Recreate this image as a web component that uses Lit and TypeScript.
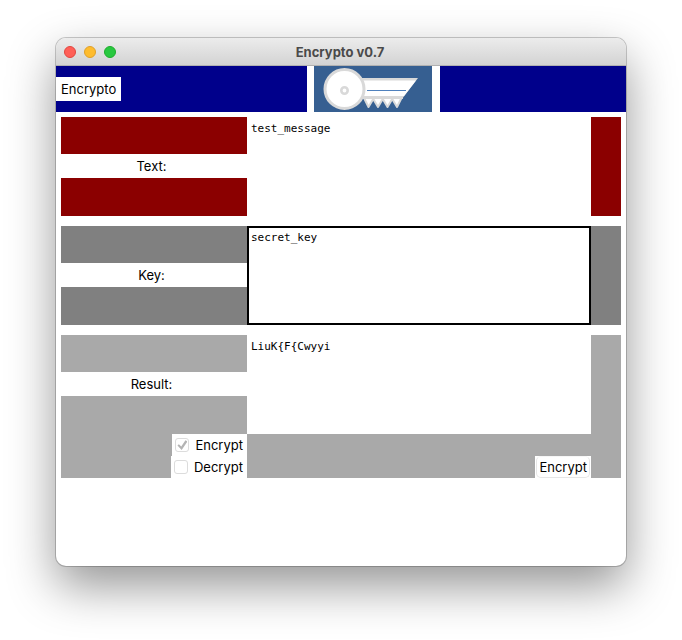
import { LitElement, html, css, svg } from "lit";
import { customElement, property, state } from "lit/decorators.js";

const keyLogo = svg`
  <rect width="118" height="46" fill="#365f91"></rect>
  <path d="M46 12H104L88 33H46Z" fill="#d9d9d9"></path>
  <path d="M102 14.500H46V30H90Z" fill="#fff"></path>
  <path d="M50 32L54.500 41L59.250 33L64 41L68.750 33L73.500 41L78.250 33L83 41L87.500 32Z"
    fill="#fff" stroke="#d9d9d9" stroke-width="2" stroke-linejoin="round"></path>
  <path d="M46 31.500H89" stroke="#d9d9d9" stroke-width="3"></path>
  <path d="M53 24.500H92" stroke="#4f81bd" stroke-width="1"></path>
  <circle cx="30.500" cy="23" r="19.500" fill="#fff" stroke="#d9d9d9" stroke-width="3"></circle>
  <circle cx="30.500" cy="24.500" r="3.200" fill="#fff" stroke="#d9d9d9" stroke-width="2.600"></circle>`;

/** A labelled multi-line field between two coloured side panels. */
@customElement("text-row")
export class TextRow extends LitElement {
  @property() label = "";
  @property() value = "";
  @property() tone = "darkred";
  @property({ type: Boolean }) active = false;

  static styles = css`
    :host {
      display: grid;
      grid-template-columns: var(--columns);
      height: 99px;
    }
    .side,
    .end {
      background: var(--tone);
    }
    .side {
      display: grid;
      grid-template-rows: 37px 24px;
    }
    .label {
      grid-row: 2;
      background: #fff;
      padding-right: 5px;
      line-height: 24px;
      text-align: center;
    }
    .field {
      box-sizing: border-box;
      width: 100%;
      height: 100%;
      margin: 0;
      padding: 3px 2px;
      border: 2px solid #fff;
      border-radius: 0;
      outline: none;
      resize: none;
      background: #fff;
      color: #000;
      font: 11px/14px "DejaVu Sans Mono", monospace;
    }
    .field.active {
      border-color: #000;
    }
  `;

  render() {
    return html`
      <div class="side" style="--tone:${this.tone}">
        <label class="label" for="field">${this.label}</label>
      </div>
      <textarea
        id="field"
        class="field ${this.active ? "active" : ""}"
        spellcheck="false"
        .value=${this.value}
      ></textarea>
      <div class="end" style="--tone:${this.tone}"></div>
    `;
  }
}

@customElement("app-root")
export class AppRoot extends LitElement {
  @state() private mode = "encrypt";

  static styles = css`
    :host {
      display: flex;
      box-sizing: border-box;
      min-height: 100vh;
      padding: 38px 56px 74px;
      overflow: hidden;
      background: #fff;
      color: #000;
      font: 13px/24px Inter, sans-serif;
      --columns: minmax(0, 186fr) minmax(0, 344fr) 30px;
    }
    .window {
      flex: 1;
      min-width: 0;
      border-radius: 10px;
      background: #fff;
      box-shadow: 0 0 0 1px rgba(0, 0, 0, 0.2), 0 20px 48px rgba(0, 0, 0, 0.42);
    }
    .titlebar {
      display: grid;
      grid-template-columns: 60px 1fr 62px;
      align-items: center;
      box-sizing: border-box;
      height: 28px;
      border-bottom: 1px solid #b1b1b1;
      border-radius: 10px 10px 0 0;
      background: linear-gradient(#ececec, #d3d3d3);
    }
    .lights {
      display: flex;
      gap: 8px;
      padding-left: 8px;
    }
    .light {
      box-sizing: border-box;
      width: 12px;
      height: 12px;
      padding: 0;
      border: 1px solid #e2463f;
      border-radius: 50%;
      background: #ff5f57;
    }
    .light.minimize {
      border-color: #e0a028;
      background: #febc2e;
    }
    .light.zoom {
      border-color: #1dad2b;
      background: #28c840;
    }
    .title {
      margin: 0;
      color: #4a4a4a;
      font-size: 13px;
      font-weight: 700;
      text-align: center;
    }
    .banner {
      display: grid;
      grid-template-columns: minmax(0, 251fr) 133px minmax(0, 186fr);
      height: 46px;
    }
    .blue {
      display: flex;
      align-items: center;
      background: #00008b;
    }
    .brand {
      padding: 0 5px;
      background: #fff;
    }
    .logo {
      display: block;
      margin: 0 8px 0 auto;
    }
    .form {
      display: flex;
      flex-direction: column;
      gap: 10px;
      padding: 5px;
    }
    .actions {
      display: grid;
      grid-template-columns: var(--columns);
      background: #a9a9a9;
    }
    .choices {
      display: flex;
      flex-direction: column;
      align-items: flex-end;
    }
    .choice {
      display: flex;
      align-items: center;
      gap: 6px;
      height: 22px;
      padding: 0 4px 0 3px;
      background: #fff;
    }
    .box {
      box-sizing: border-box;
      display: grid;
      place-items: center;
      appearance: none;
      width: 14px;
      height: 14px;
      margin: 0;
      border: 1px solid #dcdcdc;
      border-radius: 3px;
      background: #fff;
    }
    .box:checked::before {
      content: "";
      width: 10px;
      height: 10px;
      background: #b4b4b4;
      clip-path: polygon(0 56%, 14% 42%, 38% 66%, 80% 2%, 100% 14%, 42% 100%);
    }
    .submit {
      align-self: end;
      justify-self: end;
      height: 22px;
      background: #fff;
    }
    .run {
      display: block;
      height: 22px;
      margin: 0 1px;
      padding: 0 2px;
      border: 1px solid #e6e6e6;
      border-top-color: #f6f6f6;
      border-radius: 5px;
      background: #fff;
      color: #000;
      font: 13px/20px Inter, sans-serif;
    }
  `;

  private choice(mode: string, label: string) {
    return html`
      <label class="choice">
        <input
          class="box"
          type="checkbox"
          .checked=${this.mode === mode}
          @change=${() => {
            this.mode = mode;
            this.requestUpdate();
          }}
        />
        ${label}
      </label>
    `;
  }

  render() {
    return html`
      <main class="window">
        <header class="titlebar">
          <div class="lights">
            <button class="light" aria-label="Close"></button>
            <button class="light minimize" aria-label="Minimize"></button>
            <button class="light zoom" aria-label="Zoom"></button>
          </div>
          <h1 class="title">Encrypto v0.7</h1>
        </header>
        <div class="banner">
          <div class="blue"><span class="brand">Encrypto</span></div>
          <svg class="logo" width="118" height="46" viewBox="0 0 118 46" aria-hidden="true">${keyLogo}</svg>
          <div class="blue"></div>
        </div>
        <div class="form">
          <text-row label="Text:" value="test_message" tone="#8b0000"></text-row>
          <text-row label="Key:" value="secret_key" tone="#808080" active></text-row>
          <div>
            <text-row label="Result:" value="LiuK{F{Cwyyi" tone="#a9a9a9"></text-row>
            <div class="actions">
              <div class="choices">
                ${this.choice("encrypt", "Encrypt")} ${this.choice("decrypt", "Decrypt")}
              </div>
              <div class="submit"><button class="run">Encrypt</button></div>
            </div>
          </div>
        </div>
      </main>
    `;
  }
}
